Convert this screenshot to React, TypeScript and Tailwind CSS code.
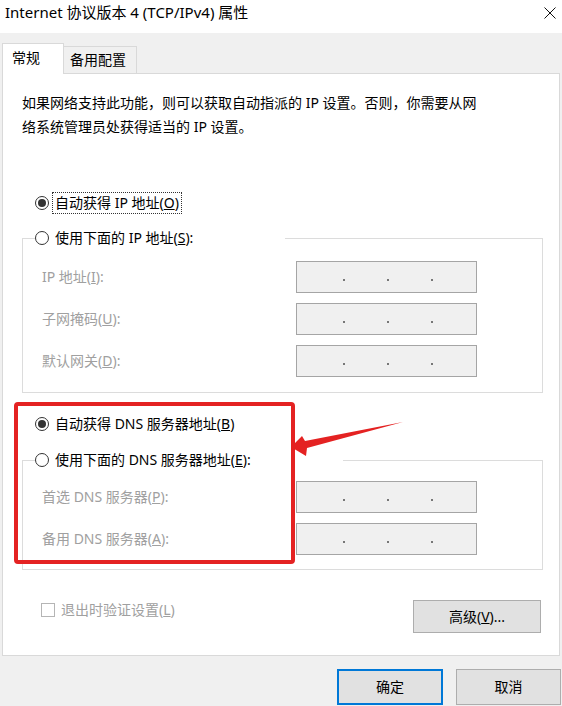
const font = "font-['Noto_Sans','Noto_Sans_CJK_SC',sans-serif]";

const Radio = ({ checked }: { checked?: boolean }) => (
  <span className="w-[14px] h-[14px] rounded-full border border-[#333] bg-white flex items-center justify-center shrink-0">
    {checked && <span className="w-[8px] h-[8px] rounded-full bg-[#333]" />}
  </span>
);

const IpBox = () => (
  <div className="w-[181px] h-[32px] border border-[#a5a5a5] bg-[#f0f0f0] flex items-center pl-[46px] pt-[6px] gap-[42px]">
    <span className="w-[2px] h-[2px] bg-[#777]" />
    <span className="w-[2px] h-[2px] bg-[#777]" />
    <span className="w-[2px] h-[2px] bg-[#777]" />
  </div>
);

const Row = ({ label, k, rest }: { label: string; k: string; rest: string }) => (
  <div className="flex items-center justify-between pr-[65px]">
    <span className="text-[#a0a0a0]">
      {label}(<u>{k}</u>){rest}
    </span>
    <IpBox />
  </div>
);

const App = () => {
  return (
    <div className={`relative w-[562px] h-[706px] bg-[#f0f0f0] overflow-hidden text-[14px] leading-[20px] text-black ${font}`}>
      {/* title bar */}
      <div className="h-[33px] bg-white flex items-start justify-between pl-[5px] pr-[6px]">
        <span className="text-[15px] leading-[24px]">Internet 协议版本 4 (TCP/IPv4) 属性</span>
        <svg className="mt-[7px]" width="12" height="12" viewBox="0 0 12 12">
          <path d="M0.5 0.5 L11.5 11.5 M11.5 0.5 L0.5 11.5" stroke="#111" strokeWidth="1" />
        </svg>
      </div>

      {/* tabs */}
      <div className="relative z-10 flex items-end pl-[2px] mt-[10px] -mb-px">
        <div className="w-[62px] h-[31px] bg-white border border-b-0 border-[#d9d9d9] pl-[9px] pt-[3px] leading-[22px]">常规</div>
        <div className="w-[73px] h-[27px] mb-px bg-[#f0f0f0] border border-l-0 border-b-0 border-[#d9d9d9] pl-[6px] pt-[2px] leading-[22px]">备用配置</div>
      </div>

      {/* panel */}
      <div className="ml-[2px] w-[558px] h-[583px] bg-white border border-[#d9d9d9] pl-[19px] pt-[17px]">
        <p className="leading-[24px]">
          如果网络支持此功能，则可以获取自动指派的 IP 设置。否则，你需要从网
          <br />
          络系统管理员处获得适当的 IP 设置。
        </p>

        <div className="mt-[54px] ml-[13px] h-[20px] flex items-center gap-[4px]">
          <Radio checked />
          <span className="outline outline-1 outline-dotted outline-[#333] px-[2px] leading-[20px]">
            自动获得 IP 地址(<u>O</u>)
          </span>
        </div>

        <fieldset className="mt-[15px] w-[521px] border border-[#dcdcdc] pb-[15px]">
          <legend className="ml-[12px] w-[250px] h-[20px] flex items-center gap-[6px]">
            <Radio />
            <span>
              使用下面的 IP 地址(<u>S</u>):
            </span>
          </legend>
          <div className="mt-[13px] pl-[19px] flex flex-col gap-[10px]">
            <Row label="IP 地址" k="I" rest=":" />
            <Row label="子网掩码" k="U" rest=":" />
            <Row label="默认网关" k="D" rest=":" />
          </div>
        </fieldset>

        <div className="mt-[21px] ml-[13px] h-[20px] flex items-center gap-[6px]">
          <Radio checked />
          <span>
            自动获得 DNS 服务器地址(<u>B</u>)
          </span>
        </div>

        <fieldset className="mt-[16px] w-[521px] border border-[#dcdcdc] pb-[14px]">
          <legend className="ml-[12px] w-[308px] h-[20px] flex items-center gap-[6px]">
            <Radio />
            <span>
              使用下面的 DNS 服务器地址(<u>E</u>):
            </span>
          </legend>
          <div className="mt-[11px] pl-[19px] flex flex-col gap-[10px]">
            <Row label="首选 DNS 服务器" k="P" rest=":" />
            <Row label="备用 DNS 服务器" k="A" rest=":" />
          </div>
        </fieldset>

        <div className="mt-[30px] w-[519px] h-[33px] flex items-start justify-between">
          <div className="ml-[19px] h-[20px] flex items-center gap-[6px] text-[#a0a0a0]">
            <span className="w-[14px] h-[14px] border border-[#b5b5b5] bg-white" />
            <span>
              退出时验证设置(<u>L</u>)
            </span>
          </div>
          <button className="w-[128px] h-[33px] bg-[#e1e1e1] border border-[#adadad]">
            高级(<u>V</u>)...
          </button>
        </div>
      </div>

      {/* dialog buttons */}
      <div className="mt-[13px] flex justify-end gap-[13px] pr-[1px]">
        <button className="w-[106px] h-[36px] bg-[#e1e1e1] border-2 border-[#0078d7]">确定</button>
        <button className="w-[105px] h-[36px] bg-[#e1e1e1] border border-[#adadad]">取消</button>
      </div>

      {/* annotation overlay */}
      <div className="absolute left-[14px] top-[402px] w-[281px] h-[162px] border-4 border-[#e42222] rounded-[4px]" />
      <svg className="absolute left-0 top-0" width="562" height="706" viewBox="0 0 562 706">
        <polygon
          points="291,447 302,436 305,441 403,422 307,448 306,456"
          fill="#e42222"
        />
      </svg>
    </div>
  );
};

export default App;
